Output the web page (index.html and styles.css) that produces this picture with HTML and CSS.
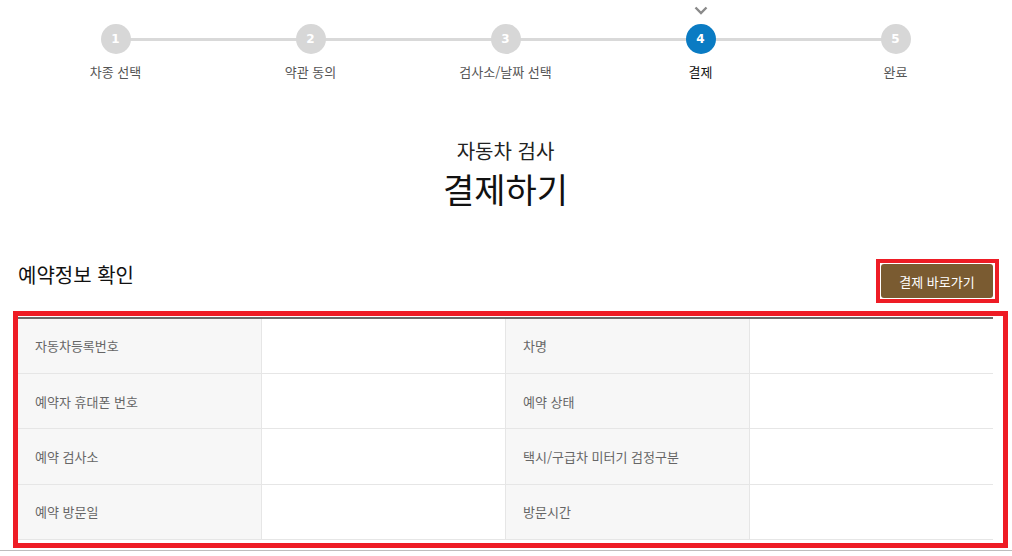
FILE: index.html
```html
<!DOCTYPE html>
<html lang="ko">
<head>
<meta charset="utf-8">
<title>결제하기</title>
<link rel="stylesheet" href="styles.css">
</head>
<body>
<div class="wrap">
  <ol class="steps">
    <li class="step"><span class="circle">1</span><span class="label">차종 선택</span></li>
    <li class="step"><span class="circle">2</span><span class="label">약관 동의</span></li>
    <li class="step"><span class="circle">3</span><span class="label">검사소/날짜 선택</span></li>
    <li class="step active">
      <svg class="check" width="14" height="9" viewBox="0 0 14 9"><polyline points="1.5,1.5 7,7 12.5,1.5" fill="none" stroke="#8a8a8a" stroke-width="2.4"/></svg>
      <span class="circle">4</span><span class="label">결제</span>
    </li>
    <li class="step"><span class="circle">5</span><span class="label">완료</span></li>
  </ol>

  <div class="title">
    <p class="sub">자동차 검사</p>
    <h1 class="main">결제하기</h1>
  </div>

  <div class="section-head">
    <h2 class="section-title">예약정보 확인</h2>
    <span class="btn-frame"><button class="pay-btn" type="button">결제 바로가기</button></span>
  </div>

  <div class="info-box">
    <table class="info">
      <colgroup><col class="c"><col class="c"><col class="c"><col class="c"></colgroup>
      <tbody>
        <tr><th>자동차등록번호</th><td></td><th>차명</th><td></td></tr>
        <tr><th>예약자 휴대폰 번호</th><td></td><th>예약 상태</th><td></td></tr>
        <tr><th>예약 검사소</th><td></td><th>택시/구급차 미터기 검정구분</th><td></td></tr>
        <tr><th>예약 방문일</th><td></td><th>방문시간</th><td></td></tr>
      </tbody>
    </table>
  </div>
</div>
<div class="bottom-rule"></div>
</body>
</html>
```

FILE: styles.css
```css
* { box-sizing: border-box; }
html, body { margin: 0; padding: 0; background: #fff; }
body {
  font-family: "Noto Sans CJK KR", "Noto Sans", sans-serif;
  color: #222;
}
.wrap {
  width: 975px;
  margin-left: 18px;
}

/* steps */
.steps {
  list-style: none;
  margin: 0;
  padding: 24px 0 0;
  display: grid;
  grid-template-columns: repeat(5, 1fr);
  position: relative;
}
.steps::before {
  content: "";
  position: absolute;
  left: 97px;
  right: 97px;
  top: 38px;
  height: 3px;
  background: #d9d9d9;
}
.step {
  display: flex;
  flex-direction: column;
  align-items: center;
  position: relative;
}
.circle {
  position: relative;
  z-index: 1;
  width: 30px;
  height: 30px;
  border-radius: 50%;
  background: #d7d7d7;
  color: #fff;
  font-family: "DejaVu Sans", sans-serif;
  font-weight: bold;
  font-size: 12px;
  line-height: 30px;
  text-align: center;
}
.label {
  margin-top: 9px;
  font-size: 13px;
  line-height: 18px;
  color: #555;
}
.step.active .circle { background: #0a7bc3; }
.step.active .label { color: #111; }
.check {
  position: absolute;
  top: -18px;
  left: 50%;
  margin-left: -7px;
}

/* title */
.title {
  text-align: center;
  margin-top: 58px;
}
.sub {
  margin: 0;
  font-size: 20px;
  line-height: 24px;
  color: #222;
}
.main {
  margin: 8px 0 0;
  font-size: 34px;
  line-height: 36px;
  font-weight: normal;
  color: #111;
}

/* section head */
.section-head {
  display: flex;
  justify-content: space-between;
  align-items: flex-start;
  margin-top: 55px;
}
.section-title {
  margin: 0;
  font-size: 20px;
  line-height: 26px;
  font-weight: normal;
  color: #111;
}
.btn-frame {
  display: block;
  margin-top: -3px;
  margin-right: -6px;
  border: 4px solid #ee1c25;
  padding: 1px 2px 1px 1px;
}
.pay-btn {
  display: block;
  width: 112px;
  height: 34px;
  border: 0;
  border-radius: 3px;
  background: #7a5b31;
  color: #fff;
  font-family: "Noto Sans CJK KR", sans-serif;
  font-size: 13px;
  padding: 0;
}

/* info table */
.info-box {
  margin-top: 8px;
  margin-left: -5px;
  width: 995px;
  border: 5px solid #ee1c25;
  padding: 1px 10px 3px 0;
}
.info {
  width: 975px;
  border-collapse: collapse;
  table-layout: fixed;
  border-top: 2px solid #6b6b6b;
}
.info col.c { width: 25%; }
.info th, .info td {
  height: 55.4px;
  border-bottom: 1px solid #e6e6e6;
  border-right: 1px solid #e6e6e6;
  padding: 0 0 0 17px;
  font-size: 13px;
  font-weight: normal;
  text-align: left;
  color: #666;
}
.info th { background: #f7f7f7; }
.info td:last-child { border-right: 0; }

.bottom-rule {
  margin-top: 2px;
  border-top: 1px solid #bdbdbd;
}
```
